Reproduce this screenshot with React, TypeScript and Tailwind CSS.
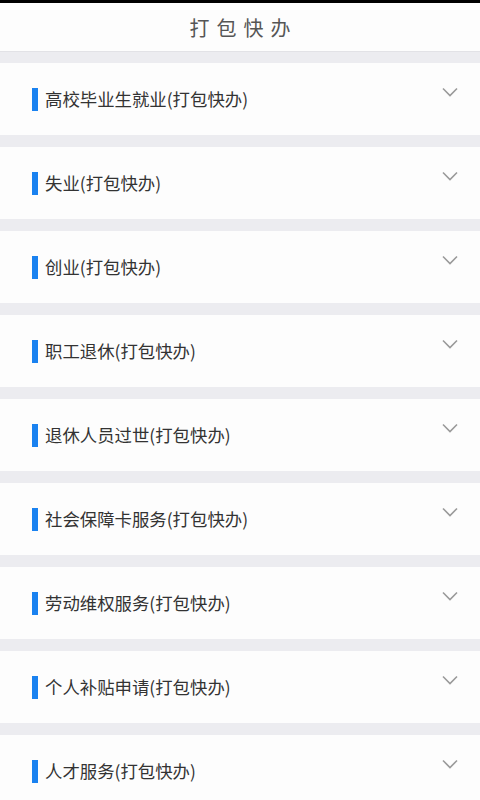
import React from "react";

const items = [
  "高校毕业生就业(打包快办)",
  "失业(打包快办)",
  "创业(打包快办)",
  "职工退休(打包快办)",
  "退休人员过世(打包快办)",
  "社会保障卡服务(打包快办)",
  "劳动维权服务(打包快办)",
  "个人补贴申请(打包快办)",
  "人才服务(打包快办)",
];

const Chevron = () => (
  <svg width="16" height="10" viewBox="0 0 16 10" fill="none">
    <path d="M1 1.5 L8 8.5 L15 1.5" stroke="#9a9a9a" strokeWidth="1.6" />
  </svg>
);

export default function App() {
  return (
    <div
      className="w-[480px] h-[800px] overflow-hidden bg-[#ececf0]"
      style={{ fontFamily: '"Noto Sans CJK SC", "Noto Sans", sans-serif' }}
    >
      <div className="h-[3px] bg-black" />
      <div className="h-[49px] bg-[#fdfdfd] flex items-center justify-center border-b border-[#e2e2e6]">
        <span className="text-[20px] tracking-[7px] pl-[7px] pt-[1px] text-[#555555]">打包快办</span>
      </div>
      <div className="flex flex-col gap-[12px] pt-[11px]">
        {items.map((title, i) => (
          <div key={i} className="h-[72px] bg-[#fdfdfd] flex items-center pl-[32px] pr-[22px]">
            <div className="w-[6px] h-[23px] bg-[#1a82f0]" />
            <span className="ml-[7px] text-[17.4px] text-[#333333] leading-none flex-1 pb-[1px]">{title}</span>
            <div className="self-start mt-[24px]">
              <Chevron />
            </div>
          </div>
        ))}
      </div>
    </div>
  );
}
